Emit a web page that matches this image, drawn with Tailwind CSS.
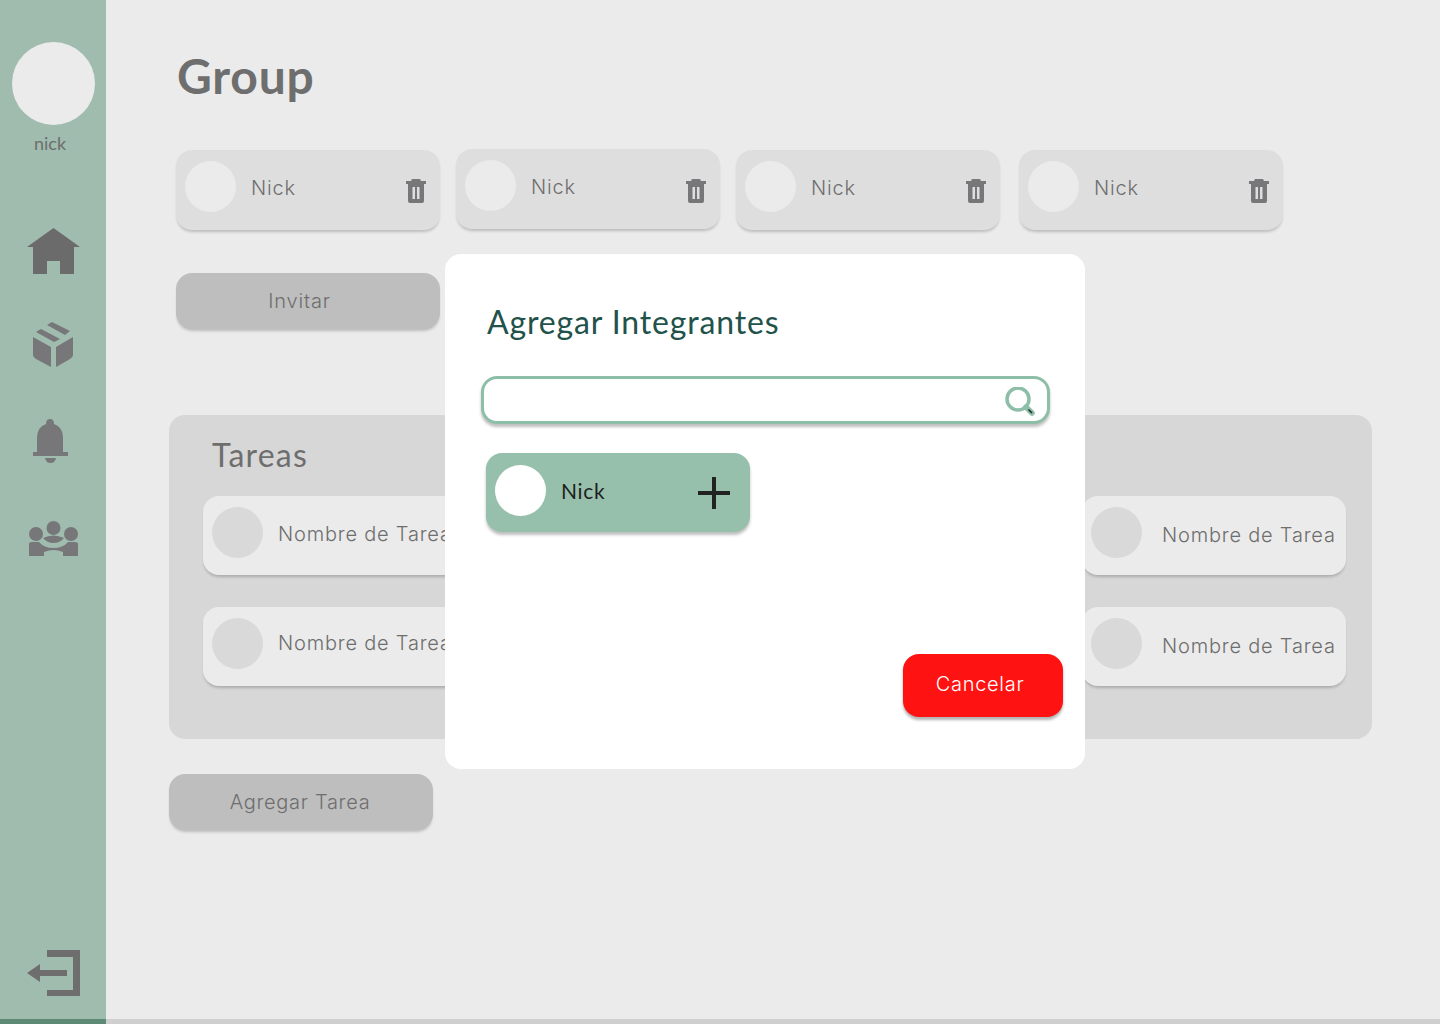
<!DOCTYPE html>
<html lang="es">
<head>
<meta charset="utf-8">
<title>Group</title>
<script src="https://cdn.jsdelivr.net/npm/@tailwindcss/browser@4"></script>
</head>
<body class="m-0 bg-[#ebebeb]">
<div class="relative flex h-[1024px] w-[1440px] overflow-hidden bg-[#cfcfcf] font-['Inter',sans-serif]">
  <aside class="flex h-[1024px] w-[106px] shrink-0 flex-col border-b-[5px] border-[#5c8a74] bg-[#9fbcae]">
    <div class="ml-[12px] mt-[42px] h-[83px] w-[83px] rounded-full bg-[#ebebeb]"></div>
    <div class="ml-[34px] mt-[7px] font-['Lato',sans-serif] text-[18px] leading-[22px] text-[#6e6e6e]">nick</div>
    <svg class="ml-[27px] mt-[74px] h-[48px] w-[54px]" viewBox="0 0 54 48" fill="#6b6b6b"><path d="M26.500 0 53 19H47V46H33V33H20V46H6V19H0Z"/></svg>
    <svg class="ml-[33px] mt-[46px] h-[46px] w-[41px]" viewBox="0 0 41 46" fill="#77777a"><path d="M14 3 19 0 37 9 32 13ZM3 10 8 7 27 17 21 20ZM0 15 18 25V45L3 37Q0 35 0 33ZM40 15V33Q40 35 37 37L23 45V25Z"/></svg>
    <svg class="ml-[32px] mt-[51px] h-[45px] w-[37px]" viewBox="0 0 37 45" fill="#77777a"><path d="M18 0Q22 0 22 5 31 8 31 19V33H36V37H1V33H5V19Q5 8 14 5 14 0 18 0ZM13 39H24Q23 44 18.500 44 14 44 13 39Z"/></svg>
    <svg class="ml-[29px] mt-[57px] h-[37px] w-[50px]" viewBox="0 0 50 37" fill="#77777a"><circle cx="24.500" cy="7" r="7"/><circle cx="7" cy="13" r="7"/><circle cx="42" cy="13" r="7"/><path d="M14 17Q24.500 12 35 17 31 22 24.500 22 18 22 14 17ZM0 23Q0 21 3 21H10Q15 27 24.500 27 34 27 39 21H46Q49 21 49 23V35H34V31Q29 29 24.500 29 20 29 15 31V35H0Z"/></svg>
    <svg class="ml-[27px] mb-[22px] mt-auto h-[47px] w-[54px]" viewBox="0 0 54 47" fill="#6e6e6e"><path d="M20 0H53V46H20V40H46V7H20ZM0 23 13 14V20H40V26H13V32Z"/></svg>
  </aside>

  <main class="h-[1019px] flex-1 bg-[#ebebeb]">
    <h1 class="ml-[71px] mt-[46px] h-[60px] font-['Lato',sans-serif] text-[48px] font-bold leading-[60px] tracking-[0.8px] text-[#6e6e6e]">Group</h1>

    <div class="ml-[70px] mt-[44px] flex items-start">
      <div class="flex h-[80px] w-[264px] items-start rounded-[16px] bg-[#dedede] pl-[9px] pr-[14px] pt-[11px] shadow-[0_3px_3px_-1px_rgba(0,0,0,0.2)]">
        <div class="h-[51px] w-[51px] rounded-full bg-[#ebebeb]"></div>
        <span class="ml-[15px] mt-[15px] flex-1 text-[20px] font-light leading-[24px] tracking-[0.8px] text-[#6e6e6e]">Nick</span>
        <svg class="mt-[18px] h-[24px] w-[20px]" viewBox="0 0 20 24" fill="#77777a"><path d="M6 0H14L15 2H20V5H18V22Q18 24 16 24H4Q2 24 2 22V5H0V2H5ZM6.500 8V20H9V8ZM11 8V20H13.500V8Z" fill-rule="evenodd"/></svg>
      </div>
      <div class="ml-[16px] mt-[-1px] flex h-[80px] w-[264px] items-start rounded-[16px] bg-[#dedede] pl-[9px] pr-[14px] pt-[11px] shadow-[0_3px_3px_-1px_rgba(0,0,0,0.2)]">
        <div class="h-[51px] w-[51px] rounded-full bg-[#ebebeb]"></div>
        <span class="ml-[15px] mt-[15px] flex-1 text-[20px] font-light leading-[24px] tracking-[0.8px] text-[#6e6e6e]">Nick</span>
        <svg class="mt-[19px] h-[24px] w-[20px]" viewBox="0 0 20 24" fill="#77777a"><path d="M6 0H14L15 2H20V5H18V22Q18 24 16 24H4Q2 24 2 22V5H0V2H5ZM6.500 8V20H9V8ZM11 8V20H13.500V8Z" fill-rule="evenodd"/></svg>
      </div>
      <div class="ml-[16px] flex h-[80px] w-[264px] items-start rounded-[16px] bg-[#dedede] pl-[9px] pr-[14px] pt-[11px] shadow-[0_3px_3px_-1px_rgba(0,0,0,0.2)]">
        <div class="h-[51px] w-[51px] rounded-full bg-[#ebebeb]"></div>
        <span class="ml-[15px] mt-[15px] flex-1 text-[20px] font-light leading-[24px] tracking-[0.8px] text-[#6e6e6e]">Nick</span>
        <svg class="mt-[18px] h-[24px] w-[20px]" viewBox="0 0 20 24" fill="#77777a"><path d="M6 0H14L15 2H20V5H18V22Q18 24 16 24H4Q2 24 2 22V5H0V2H5ZM6.500 8V20H9V8ZM11 8V20H13.500V8Z" fill-rule="evenodd"/></svg>
      </div>
      <div class="ml-[19px] flex h-[80px] w-[264px] items-start rounded-[16px] bg-[#dedede] pl-[9px] pr-[14px] pt-[11px] shadow-[0_3px_3px_-1px_rgba(0,0,0,0.2)]">
        <div class="h-[51px] w-[51px] rounded-full bg-[#ebebeb]"></div>
        <span class="ml-[15px] mt-[15px] flex-1 text-[20px] font-light leading-[24px] tracking-[0.8px] text-[#6e6e6e]">Nick</span>
        <svg class="mt-[18px] h-[24px] w-[20px]" viewBox="0 0 20 24" fill="#77777a"><path d="M6 0H14L15 2H20V5H18V22Q18 24 16 24H4Q2 24 2 22V5H0V2H5ZM6.500 8V20H9V8ZM11 8V20H13.500V8Z" fill-rule="evenodd"/></svg>
      </div>
    </div>

    <button class="ml-[70px] mt-[43px] block h-[56px] w-[264px] rounded-[16px] bg-[#bebebe] pr-[17px] text-[20px] font-light tracking-[0.8px] text-[#6e6e6e] shadow-[0_3px_3px_-1px_rgba(0,0,0,0.2)]">Invitar</button>

    <section class="ml-[63px] mt-[86px] h-[324px] w-[1203px] rounded-[16px] bg-[#d7d7d7] pl-[34px] pr-[26px]">
      <h2 class="ml-[9px] pt-[20px] font-['Lato',sans-serif] text-[32px] leading-[40px] tracking-[1.2px] text-[#6e6e6e]">Tareas</h2>
      <div class="mt-[21px] grid grid-cols-[264px_264px_264px] justify-between gap-y-[32px]">
        <div class="flex h-[79px] items-start rounded-[16px] bg-[#ebebeb] pl-[9px] pt-[11px] shadow-[0_3px_3px_-1px_rgba(0,0,0,0.2)]"><div class="h-[51px] w-[51px] shrink-0 rounded-full bg-[#d9d9d9]"></div><span class="ml-[15px] mt-[15px] whitespace-nowrap text-[20px] font-light leading-[24px] tracking-[0.8px] text-[#6e6e6e]">Nombre de Tarea</span></div>
        <div class="flex h-[79px] items-start rounded-[16px] bg-[#ebebeb] pl-[9px] pt-[11px] shadow-[0_3px_3px_-1px_rgba(0,0,0,0.2)]"><div class="h-[51px] w-[51px] shrink-0 rounded-full bg-[#d9d9d9]"></div><span class="ml-[15px] mt-[15px] whitespace-nowrap text-[20px] font-light leading-[24px] tracking-[0.8px] text-[#6e6e6e]">Nombre de Tarea</span></div>
        <div class="flex h-[79px] items-start rounded-[16px] bg-[#ebebeb] pl-[9px] pt-[11px] shadow-[0_3px_3px_-1px_rgba(0,0,0,0.2)]"><div class="h-[51px] w-[51px] shrink-0 rounded-full bg-[#d9d9d9]"></div><span class="ml-[20px] mt-[16px] whitespace-nowrap text-[20px] font-light leading-[24px] tracking-[0.8px] text-[#6e6e6e]">Nombre de Tarea</span></div>
        <div class="flex h-[79px] items-start rounded-[16px] bg-[#ebebeb] pl-[9px] pt-[11px] shadow-[0_3px_3px_-1px_rgba(0,0,0,0.2)]"><div class="h-[51px] w-[51px] shrink-0 rounded-full bg-[#d9d9d9]"></div><span class="ml-[15px] mt-[13px] whitespace-nowrap text-[20px] font-light leading-[24px] tracking-[0.8px] text-[#6e6e6e]">Nombre de Tarea</span></div>
        <div class="flex h-[79px] items-start rounded-[16px] bg-[#ebebeb] pl-[9px] pt-[11px] shadow-[0_3px_3px_-1px_rgba(0,0,0,0.2)]"><div class="h-[51px] w-[51px] shrink-0 rounded-full bg-[#d9d9d9]"></div><span class="ml-[15px] mt-[13px] whitespace-nowrap text-[20px] font-light leading-[24px] tracking-[0.8px] text-[#6e6e6e]">Nombre de Tarea</span></div>
        <div class="flex h-[79px] items-start rounded-[16px] bg-[#ebebeb] pl-[9px] pt-[11px] shadow-[0_3px_3px_-1px_rgba(0,0,0,0.2)]"><div class="h-[51px] w-[51px] shrink-0 rounded-full bg-[#d9d9d9]"></div><span class="ml-[20px] mt-[16px] whitespace-nowrap text-[20px] font-light leading-[24px] tracking-[0.8px] text-[#6e6e6e]">Nombre de Tarea</span></div>
      </div>
    </section>

    <button class="ml-[63px] mt-[35px] block h-[56px] w-[264px] rounded-[16px] bg-[#bebebe] pr-[2px] text-[20px] font-light tracking-[0.7px] text-[#6e6e6e] shadow-[0_3px_3px_-1px_rgba(0,0,0,0.2)]">Agregar Tarea</button>
  </main>

  <div class="absolute left-[445px] top-[254px] h-[515px] w-[640px] rounded-[16px] bg-white">
    <h2 class="ml-[42px] mt-[48px] font-['Lato',sans-serif] text-[32px] leading-[40px] tracking-[0.85px] text-[#22524a]">Agregar Integrantes</h2>
    <div class="ml-[36px] mt-[34px] flex h-[48px] w-[569px] items-center justify-end rounded-[16px] border-[3px] border-[#8dbfa8] bg-white pr-[12px] shadow-[0_3px_3px_rgba(0,0,0,0.25)]">
      <svg class="mt-[3px] h-[30px] w-[30px]" viewBox="0 0 30 30" fill="none"><circle cx="13" cy="12" r="11" stroke="#8dbfa8" stroke-width="3.500"/><path d="M21 20 27 26" stroke="#8dbfa8" stroke-width="5.500" stroke-linecap="round"/><path d="M23.500 22.500 27 26" stroke="#222" stroke-width="1.500"/></svg>
    </div>
    <div class="ml-[41px] mt-[29px] flex h-[79px] w-[264px] items-start rounded-[16px] bg-[#96c0ab] pl-[9px] pr-[20px] pt-[12px] shadow-[0_3px_3px_rgba(0,0,0,0.25)]">
      <div class="h-[51px] w-[51px] rounded-full bg-white"></div>
      <span class="ml-[15px] mt-[13px] flex-1 font-['Lato',sans-serif] text-[21px] leading-[26px] tracking-[0.7px] text-[#1f1f1f]">Nick</span>
      <svg class="mt-[12px] h-[32px] w-[32px]" viewBox="0 0 32 32" fill="#222"><path d="M14 0H18V14H32V18H18V32H14V18H0V14H14Z"/></svg>
    </div>
    <button class="ml-[458px] mt-[122px] block h-[63px] w-[160px] rounded-[16px] bg-[#ff1212] pb-[4px] pr-[6px] text-[20px] font-light tracking-[0.7px] text-white shadow-[0_3px_3px_rgba(0,0,0,0.3)]">Cancelar</button>
  </div>
</div>
</body>
</html>
